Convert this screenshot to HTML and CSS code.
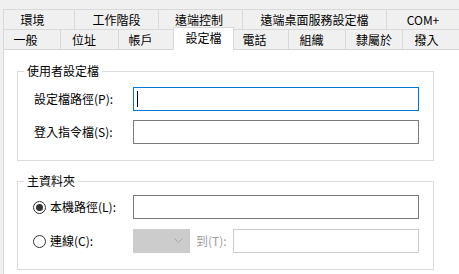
FILE: index.html
```html
<!DOCTYPE html>
<html lang="zh-Hant">
<head>
  <meta charset="UTF-8">
  <title>內容 - 設定檔</title>
  <link rel="stylesheet" href="styles.css">
</head>
<body>
  <div class="tabs">
    <div class="tab-row back">
      <div class="tab">環境</div>
      <div class="tab">工作階段</div>
      <div class="tab">遠端控制</div>
      <div class="tab">遠端桌面服務設定檔</div>
      <div class="tab">COM+</div>
    </div>
    <div class="tab-row front">
      <div class="tab">一般</div>
      <div class="tab">位址</div>
      <div class="tab">帳戶</div>
      <div class="tab active">設定檔</div>
      <div class="tab">電話</div>
      <div class="tab">組織</div>
      <div class="tab">隸屬於</div>
      <div class="tab">撥入</div>
    </div>
  </div>

  <div class="panel">
    <fieldset class="group user-profile">
      <legend>使用者設定檔</legend>
      <div class="row">
        <label class="label">設定檔路徑(P):</label>
        <div class="field focused"><span class="caret"></span></div>
      </div>
      <div class="row">
        <label class="label">登入指令檔(S):</label>
        <div class="field"></div>
      </div>
    </fieldset>

    <fieldset class="group home-folder">
      <legend>主資料夾</legend>
      <div class="row">
        <label class="radio-label"><span class="radio checked"></span>本機路徑(L):</label>
        <div class="field"></div>
      </div>
      <div class="row">
        <label class="radio-label"><span class="radio"></span>連線(C):</label>
        <div class="combo disabled">
          <svg width="9" height="6" viewBox="0 0 9 6"><polyline points="0.5,0.5 4.5,4.5 8.5,0.5" fill="none" stroke="#a8a8a8" stroke-width="1"/></svg>
        </div>
        <span class="to-label">到(T):</span>
        <div class="field disabled short"></div>
      </div>
    </fieldset>
  </div>
</body>
</html>
```

FILE: styles.css
```css
body { margin: 0; width: 459px; height: 274px; overflow: hidden; background: #f0f0f0; color: #000; font-family: "Noto Sans CJK TC", "Microsoft JhengHei UI", sans-serif; font-size: 12px; line-height: 16px; }

/* tab strip */
.tabs { padding: 9px 0 0 3px; }
.tab-row { display: flex; height: 20px; }
.tab { box-sizing: border-box; flex: none; display: flex; align-items: center; justify-content: center; border-top: 1px solid #d9d9d9; border-left: 1px solid #d9d9d9; white-space: nowrap; }
.tab:last-child { flex: 1; }
.back .tab:nth-child(1) { width: 71px; padding-right: 13px; }
.back .tab:nth-child(2) { width: 84px; }
.back .tab:nth-child(3) { width: 84px; padding-right: 3px; }
.back .tab:nth-child(4) { width: 144px; }
.front .tab { padding-right: 11px; }
.front .tab:nth-child(1) { width: 57px; padding-right: 13px; }
.front .tab:nth-child(2) { width: 58px; }
.front .tab:nth-child(3) { width: 55px; }
.front .tab:nth-child(5) { width: 55px; margin-left: -1px; padding-right: 13px; }
.front .tab:nth-child(6) { width: 57px; }
.front .tab:nth-child(7) { width: 57px; padding-right: 0; }
.front .tab:nth-child(8) { padding-right: 9px; }
.tab.active { position: relative; z-index: 1; width: 61px; height: 23px; margin-top: -2px; padding: 2px 0 0; align-items: flex-start; background: #fff; border-right: 1px solid #d9d9d9; }

/* page body */
.panel { box-sizing: border-box; height: 230px; margin-left: 3px; padding: 13px 0 0 13px; background: #fff; border: 1px solid #d9d9d9; border-right: none; }

.group { box-sizing: border-box; width: 417px; margin: 0; padding: 0 0 16px 6px; border: 1px solid #dcdcdc; }
.group legend { padding: 0 3px; }
.home-folder { margin-top: 12px; }

.row { display: flex; align-items: center; margin-left: 10px; }
.user-profile .row { margin-top: 8px; }
.user-profile .row + .row { margin-top: 9px; }
.home-folder .row { margin-top: 6px; margin-left: 9px; }
.home-folder .row + .row { margin-top: 10px; }

.label { width: 99px; flex: none; }
.radio-label { width: 100px; flex: none; display: flex; align-items: center; }

.field { box-sizing: border-box; flex: none; width: 286px; height: 24px; border: 1px solid #7a7a7a; background: #fff; display: flex; align-items: center; padding-left: 3px; }
.field.focused { border-color: #0078d7; }
.field.disabled { border-color: #cccccc; }
.field.short { width: 186px; }
.caret { width: 1px; height: 16px; background: #000; }

.radio { box-sizing: border-box; width: 13px; height: 13px; margin-right: 4px; border: 1px solid #333; border-radius: 50%; display: flex; align-items: center; justify-content: center; }
.radio.checked::after { content: ""; width: 7px; height: 7px; border-radius: 50%; background: #333; }

.combo { box-sizing: border-box; flex: none; width: 57px; height: 24px; display: flex; align-items: center; justify-content: flex-end; padding-right: 6px; background: #cccccc; border: 1px solid #cccccc; }
.to-label { box-sizing: border-box; flex: none; width: 43px; padding-left: 6px; white-space: nowrap; color: #a0a0a0; }
```
